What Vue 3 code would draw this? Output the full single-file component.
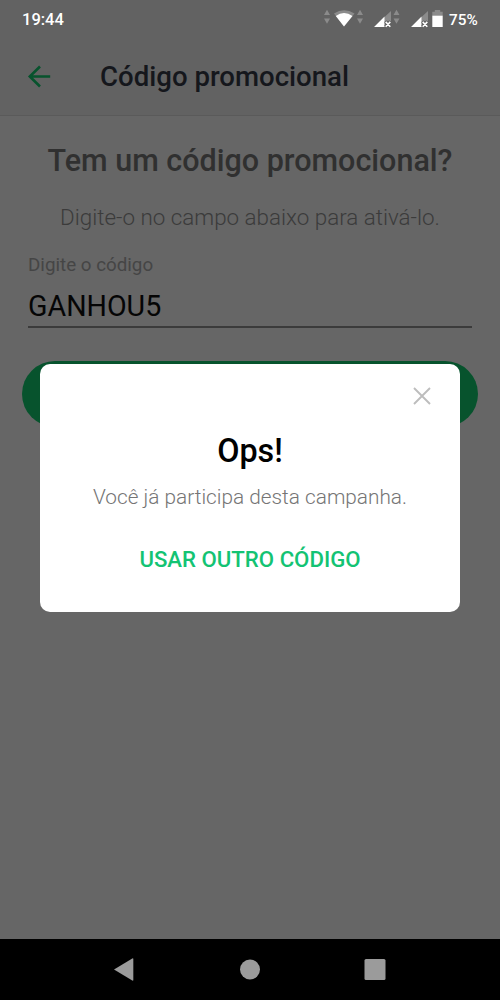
<script setup>
const title = 'Código promocional'
const code = 'GANHOU5'
</script>

<template>
  <div class="screen">
    <header class="top">
      <div class="status">
        <span class="time">19:44</span>
        <svg class="indicators" width="124" height="24" viewBox="0 0 124 24">
          <g fill="#8b8b8b">
            <path d="M4 .8l3 5.200H1zM4 14.700L1 9.500h6zM37 .8l3 5.200h-6zM37 14.700l-3-5.200h6zM73.500 .8l3 5.200h-6zM73.500 14.700l-3-5.200h6z" />
            <path d="M11 4.500Q21-2.200 31.500 4.500L21 17.500z" />
            <path d="M68 2V12h-7V8.500zM105 2V12h-7V8.500z" />
            <path d="M109.300 2.700h2.500V.9h5.400v1.800h2.500V7h-10.400z" />
          </g>
          <g fill="#fff">
            <path d="M12.800 6.900Q21 1.300 29.500 6.900L21 17.500z" />
            <path d="M51 18L61.500 7.500V18zM88 18L98.500 7.500V18z" />
            <path d="M109.300 6.700h10.400V18h-10.400z" />
          </g>
          <g fill="none" stroke="#626262" stroke-width="3.500">
            <path d="M62.500 12.500l5 5m0-5l-5 5M99.500 12.500l5 5m0-5l-5 5" />
          </g>
          <g fill="none" stroke="#fff" stroke-width="1.600">
            <path d="M62.700 12.900l4.600 4.800m0-4.800l-4.600 4.800M99.700 12.900l4.600 4.800m0-4.800l-4.600 4.800" />
          </g>
        </svg>
        <span class="percent">75%</span>
      </div>
      <div class="toolbar">
        <svg class="back" width="24" height="24" viewBox="0 0 24 24" fill="none" stroke="#07532d" stroke-width="2.600">
          <path d="M23.200 11.500H3M13 1.500L2.800 11.500l10.200 10" />
        </svg>
        <h1>{{ title }}</h1>
      </div>
    </header>

    <main>
      <h2>Tem um código promocional?</h2>
      <p class="hint">Digite-o no campo abaixo para ativá-lo.</p>
      <div class="field">
        <label>Digite o código</label>
        <div class="value">{{ code }}</div>
      </div>
      <div class="submit"></div>
    </main>

    <nav>
      <svg width="500" height="61" viewBox="0 0 500 61" fill="#9b9b9b">
        <path d="M114 30.500l18.300-11q1-.5 1 .6v20.800q0 1.100-1 .6z" />
        <circle cx="250" cy="30.500" r="10" />
        <rect x="364.500" y="20" width="21" height="21" rx="1.500" />
      </svg>
    </nav>

    <section class="dialog">
      <svg class="close" width="18" height="18" viewBox="0 0 18 18" fill="none" stroke="#bdbdbd" stroke-width="1.900">
        <path d="M1 1l16 16M17 1L1 17" />
      </svg>
      <h3>Ops!</h3>
      <p class="message">Você já participa desta campanha.</p>
      <div class="action">USAR OUTRO CÓDIGO</div>
    </section>
  </div>
</template>

<style>
body {
  margin: 0;
}
</style>

<style scoped>
.screen {
  position: relative;
  display: flex;
  flex-direction: column;
  width: 500px;
  height: 1000px;
  overflow: hidden;
  background: #666;
  font-family: Roboto, sans-serif;
}
h1, h2, h3, p {
  margin: 0;
  font-weight: 500;
  white-space: nowrap;
}
.top {
  box-sizing: border-box;
  height: 116px;
  background: #626262;
  border-bottom: 1px solid #5a5a5a;
}
.status {
  display: flex;
  height: 38px;
  padding: 0 22px;
  color: #fff;
  font-size: 16.500px;
  font-weight: 500;
  line-height: 40px;
}
.indicators {
  margin: 9px 2px 0 auto;
}
.percent {
  width: 29px;
  font-size: 15.300px;
}
.toolbar {
  display: flex;
  align-items: center;
  height: 78px;
}
.back {
  margin-left: 27px;
}
h1 {
  margin-left: 49px;
  color: #15171c;
  font-size: 27.600px;
  line-height: 34px;
}
main {
  flex: 1;
  display: flex;
  flex-direction: column;
  padding: 26px 22px 0;
}
h2 {
  text-align: center;
  color: #303030;
  font-size: 30.500px;
  line-height: 38px;
}
.hint {
  margin-top: 23px;
  text-align: center;
  color: #3b3b3b;
  font-size: 22.400px;
  font-weight: 300;
  line-height: 28px;
}
.field {
  margin: 23px 6px 0;
  border-bottom: 2px solid #3b3b3b;
}
label {
  display: block;
  color: #454545;
  font-size: 18.800px;
  line-height: 22px;
}
.value {
  height: 50px;
  color: #050505;
  font-size: 28.600px;
  line-height: 61px;
}
.submit {
  height: 66px;
  margin-top: 33px;
  border-radius: 33px;
  background: #07532d;
}
nav {
  height: 61px;
  background: #000;
}
nav svg {
  display: block;
}
.dialog {
  position: absolute;
  top: 364px;
  left: 40px;
  box-sizing: border-box;
  display: flex;
  flex-direction: column;
  align-items: center;
  width: 420px;
  height: 248px;
  padding-top: 23px;
  border-radius: 10px;
  background: #fff;
}
.close {
  align-self: flex-end;
  margin-right: 29px;
}
h3 {
  margin-top: 26px;
  color: #000;
  font-size: 32.300px;
  line-height: 40px;
}
.message {
  margin-top: 12px;
  color: #757575;
  font-size: 20.800px;
  font-weight: 300;
  line-height: 28px;
}
.action {
  margin-top: 34px;
  color: #13c373;
  font-size: 22.200px;
  font-weight: 500;
  line-height: 28px;
}
</style>
